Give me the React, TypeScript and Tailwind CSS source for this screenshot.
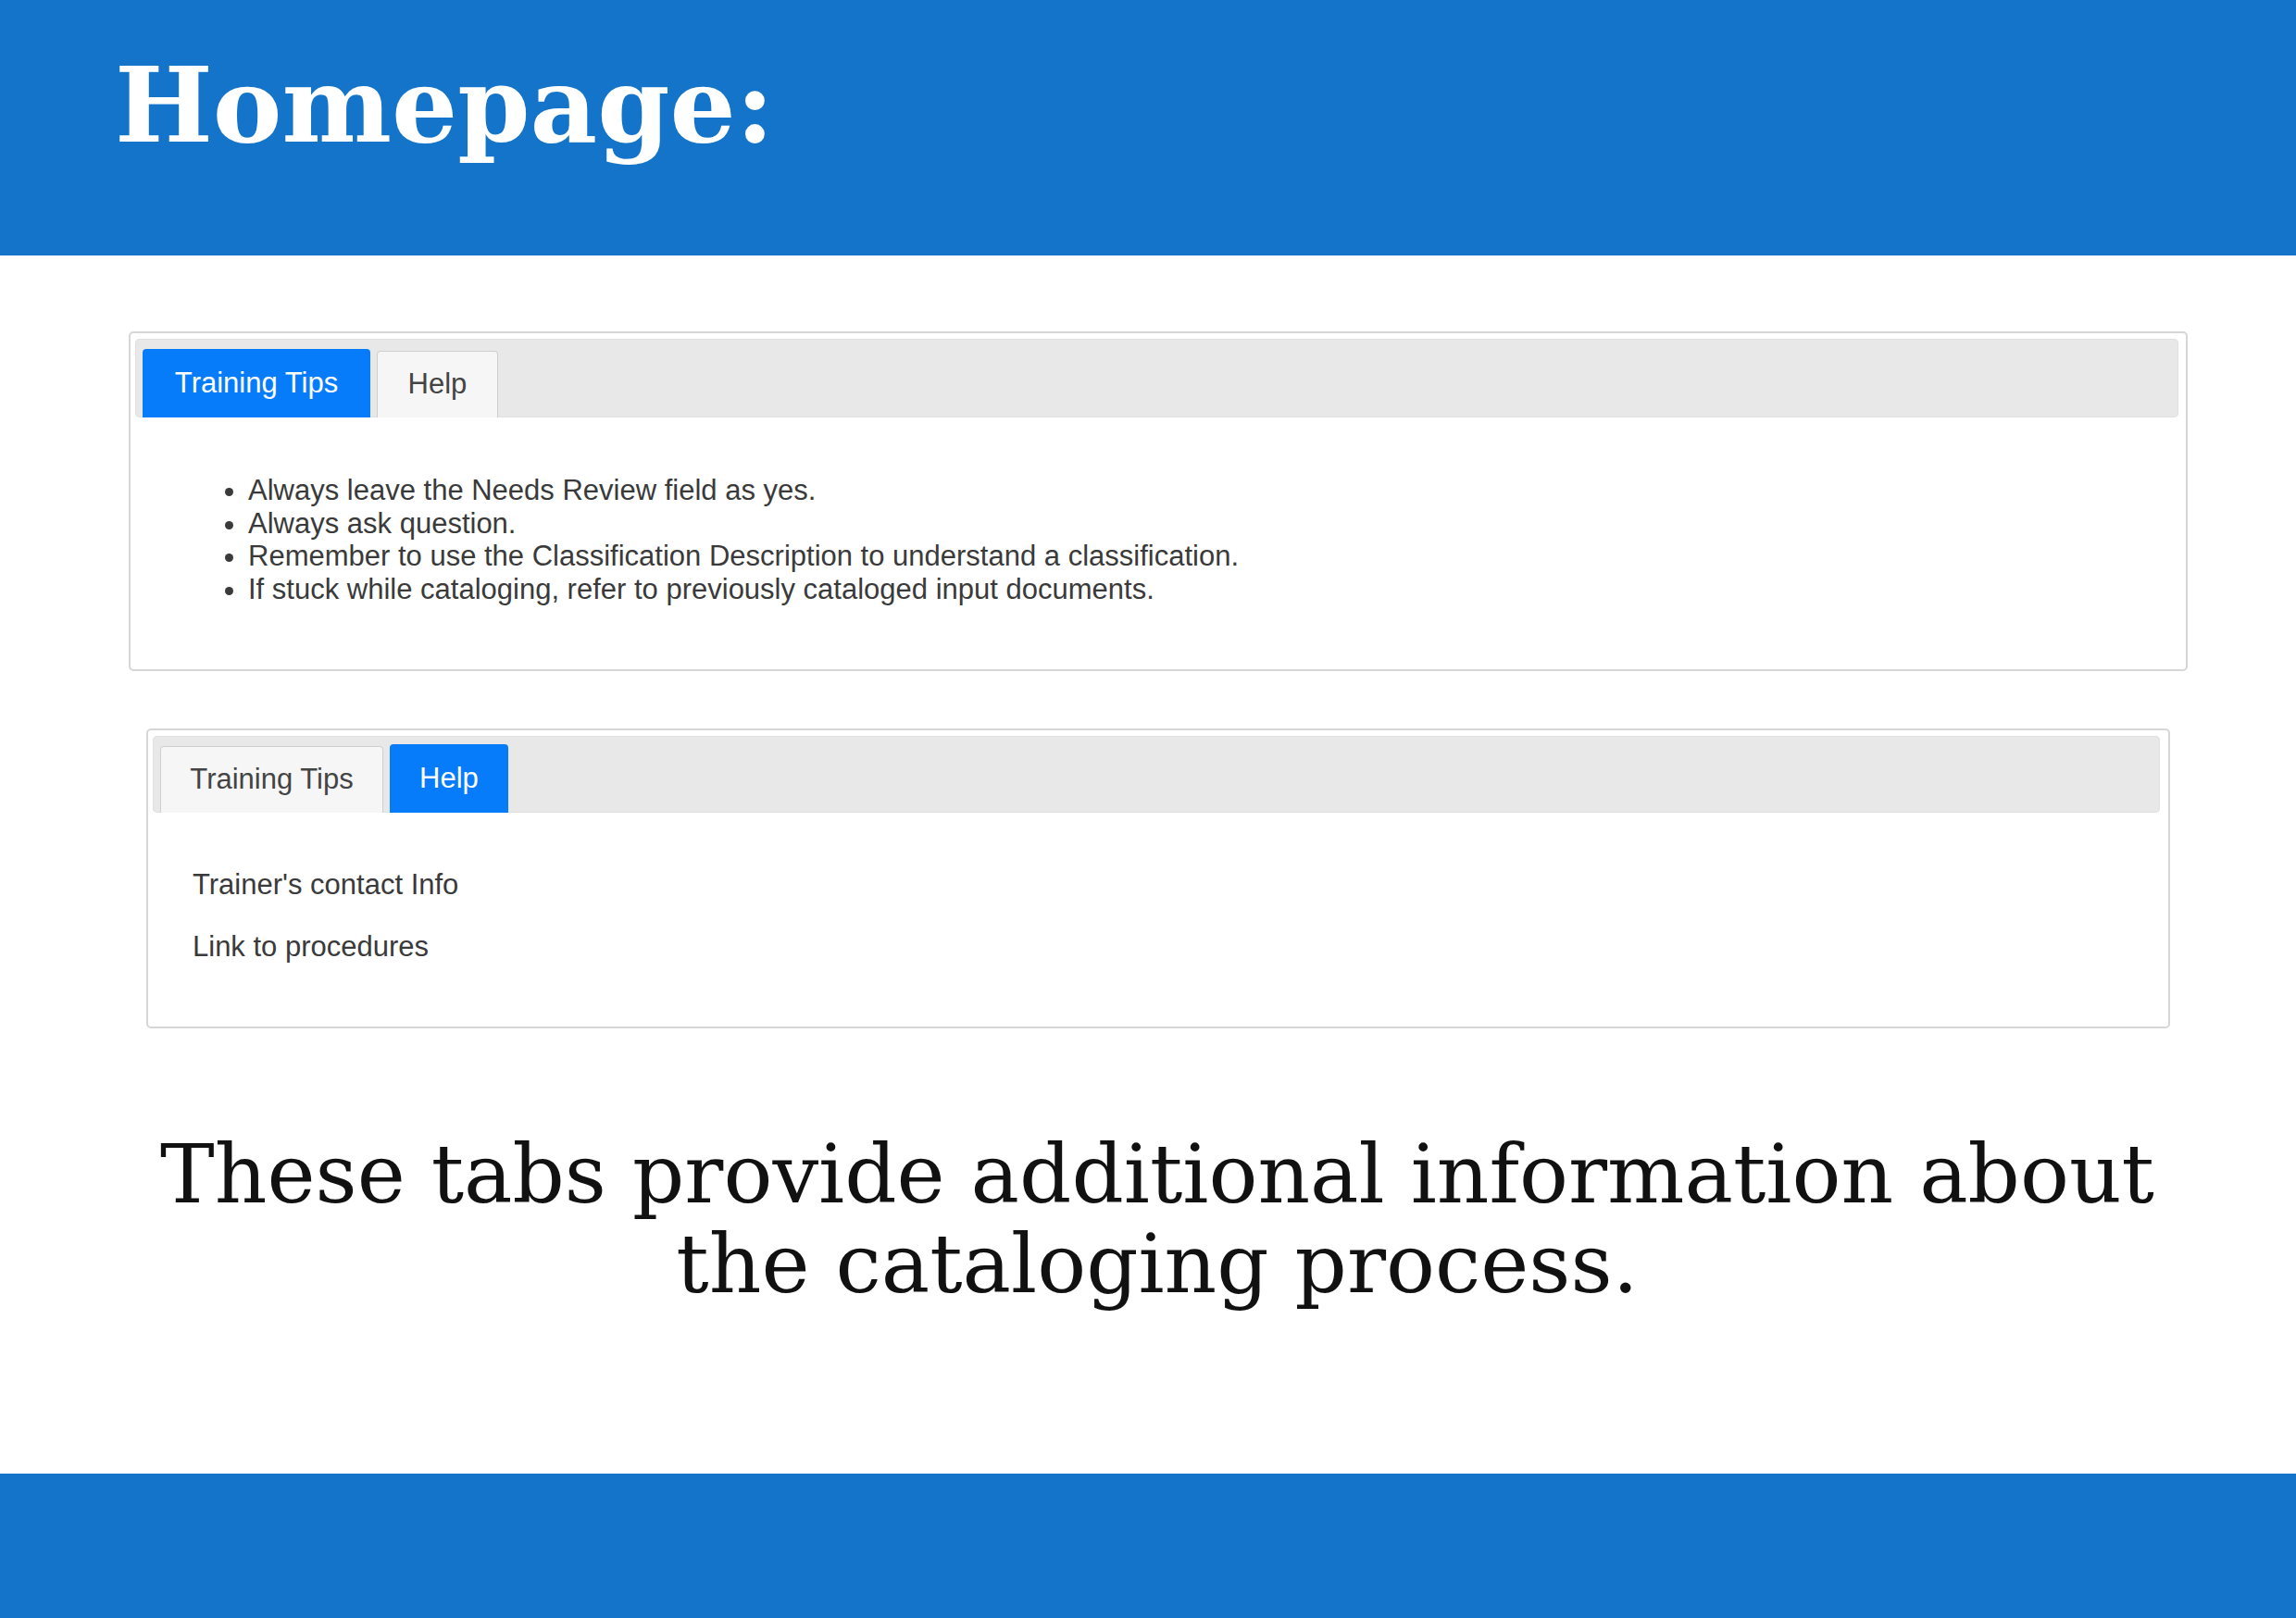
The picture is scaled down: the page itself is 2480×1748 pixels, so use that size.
const SERIF = 'font-["DejaVu_Serif",serif]';

type Tab = { label: string; width: string };

function TabBar({ tabs, active, height }: { tabs: Tab[]; active: string; height: string }) {
  return (
    <div className={`flex ${height} items-end gap-[7px] rounded-[5px] bg-[#e8e8e8] pl-[8px] shadow-[inset_0_0_0_1px_#e0e0e0]`}>
      {tabs.map((t) =>
        t.label === active ? (
          <div
            key={t.label}
            className={`flex h-[74px] ${t.width} items-center justify-center rounded-t-[4px] bg-[#077cfb] text-white`}
          >
            {t.label}
          </div>
        ) : (
          <div
            key={t.label}
            className={`flex h-[72px] ${t.width} items-center justify-center rounded-t-[4px] border border-b-0 border-[#cfcfcf] bg-[#f6f6f6] text-[#444]`}
          >
            {t.label}
          </div>
        ),
      )}
    </div>
  );
}

export default function App() {
  return (
    <div className="flex h-[1748px] w-[2480px] flex-col bg-white font-['Liberation_Sans',Arial,sans-serif]">
      <header className="h-[276px] shrink-0 bg-[#1474c9] pl-[124px] pt-[58px]">
        <h1 className={`${SERIF} text-[112px] font-bold leading-[112px] text-white`}>Homepage:</h1>
      </header>

      <div className="ml-[139px] mt-[82px] w-[2224px] rounded-[5px] border-2 border-[#d6d6d6] pl-[5px] pr-[8px] pt-[6px] text-[31px]">
        <TabBar
          height="h-[85px]"
          tabs={[
            { label: 'Training Tips', width: 'w-[246px]' },
            { label: 'Help', width: 'w-[131px]' },
          ]}
          active="Training Tips"
        />
        <ul className="list-disc pb-[69px] pl-[122px] pt-[61px] leading-[35.5px] text-[#3a3a3a]">
          <li>Always leave the Needs Review field as yes.</li>
          <li>Always ask question.</li>
          <li>Remember to use the Classification Description to understand a classification.</li>
          <li>If stuck while cataloging, refer to previously cataloged input documents.</li>
        </ul>
      </div>

      <div className="ml-[158px] mt-[62px] w-[2186px] rounded-[5px] border-2 border-[#d6d6d6] pl-[5px] pr-[9px] pt-[6px] text-[31px]">
        <TabBar
          height="h-[83px]"
          tabs={[
            { label: 'Training Tips', width: 'w-[241px]' },
            { label: 'Help', width: 'w-[128px]' },
          ]}
          active="Help"
        />
        <div className="flex flex-col gap-[32px] pb-[69px] pl-[43px] pt-[60px] leading-[35px] text-[#3a3a3a]">
          <p>Trainer&apos;s contact Info</p>
          <p>Link to procedures</p>
        </div>
      </div>

      <p
        className={`${SERIF} mt-[109px] whitespace-nowrap pl-[20px] text-center text-[88px] leading-[97px] text-[#111]`}
      >
        These tabs provide additional information about
        <br />
        the cataloging process.
      </p>

      <footer className="mt-auto h-[156px] shrink-0 bg-[#1474c9]" />
    </div>
  );
}
